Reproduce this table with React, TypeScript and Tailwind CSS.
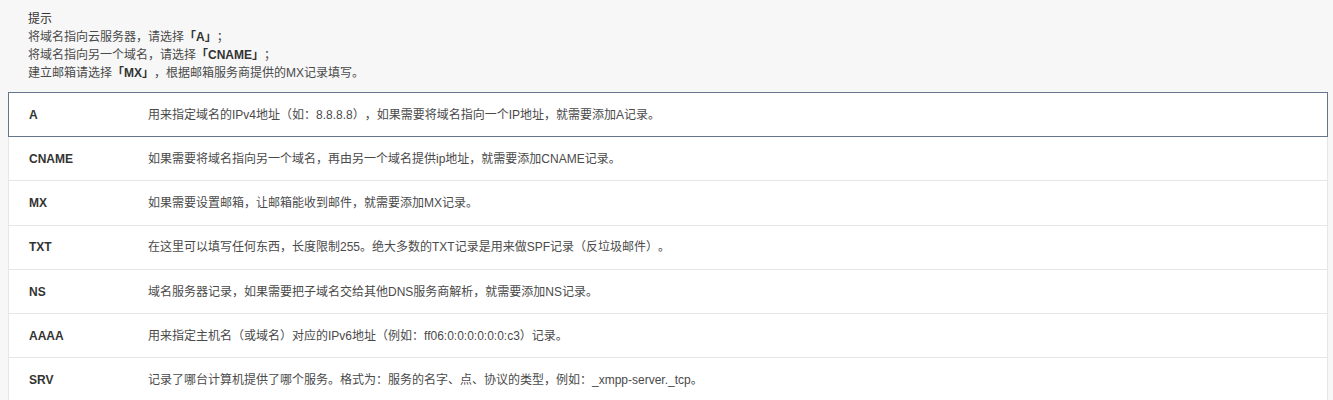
const rows = [
  { type: "A", desc: "用来指定域名的IPv4地址（如：8.8.8.8），如果需要将域名指向一个IP地址，就需要添加A记录。" },
  { type: "CNAME", desc: "如果需要将域名指向另一个域名，再由另一个域名提供ip地址，就需要添加CNAME记录。" },
  { type: "MX", desc: "如果需要设置邮箱，让邮箱能收到邮件，就需要添加MX记录。" },
  { type: "TXT", desc: "在这里可以填写任何东西，长度限制255。绝大多数的TXT记录是用来做SPF记录（反垃圾邮件）。" },
  { type: "NS", desc: "域名服务器记录，如果需要把子域名交给其他DNS服务商解析，就需要添加NS记录。" },
  { type: "AAAA", desc: "用来指定主机名（或域名）对应的IPv6地址（例如：ff06:0:0:0:0:0:0:c3）记录。" },
  { type: "SRV", desc: "记录了哪台计算机提供了哪个服务。格式为：服务的名字、点、协议的类型，例如：_xmpp-server._tcp。" },
]

export default function App() {
  return (
    <div
      className="min-h-[400px] bg-[#f7f7f7] text-[12px] text-[#4a4a4a] [text-spacing-trim:space-all]"
      style={{ fontFamily: '"Liberation Sans", "Noto Sans CJK SC", sans-serif' }}
    >
      <div className="pt-[10px] pl-[28px] leading-[18px]">
        <div className="text-[#333]">提示</div>
        <div>
          将域名指向云服务器，请选择<b className="text-[#333]">「A」</b>；
        </div>
        <div>
          将域名指向另一个域名，请选择<b className="text-[#333]">「CNAME」</b>；
        </div>
        <div>
          建立邮箱请选择<b className="text-[#333]">「MX」</b>，根据邮箱服务商提供的MX记录填写。
        </div>
      </div>
      <div className="mt-[10px] ml-[8px] w-[1320px] bg-white border-x border-[#e6e6e6]">
        {rows.map((r, i) => (
          <div
            key={r.type}
            className={
              i === 0
                ? "flex items-center h-[45px] -mx-px border border-[#66758c] bg-white"
                : "flex items-center h-[44.3px] border-b border-[#e6e6e6]"
            }
          >
            <div className="w-[139px] pl-[20px] font-bold text-[#333]">{r.type}</div>
            <div className="flex-1">{r.desc}</div>
          </div>
        ))}
      </div>
    </div>
  )
}
